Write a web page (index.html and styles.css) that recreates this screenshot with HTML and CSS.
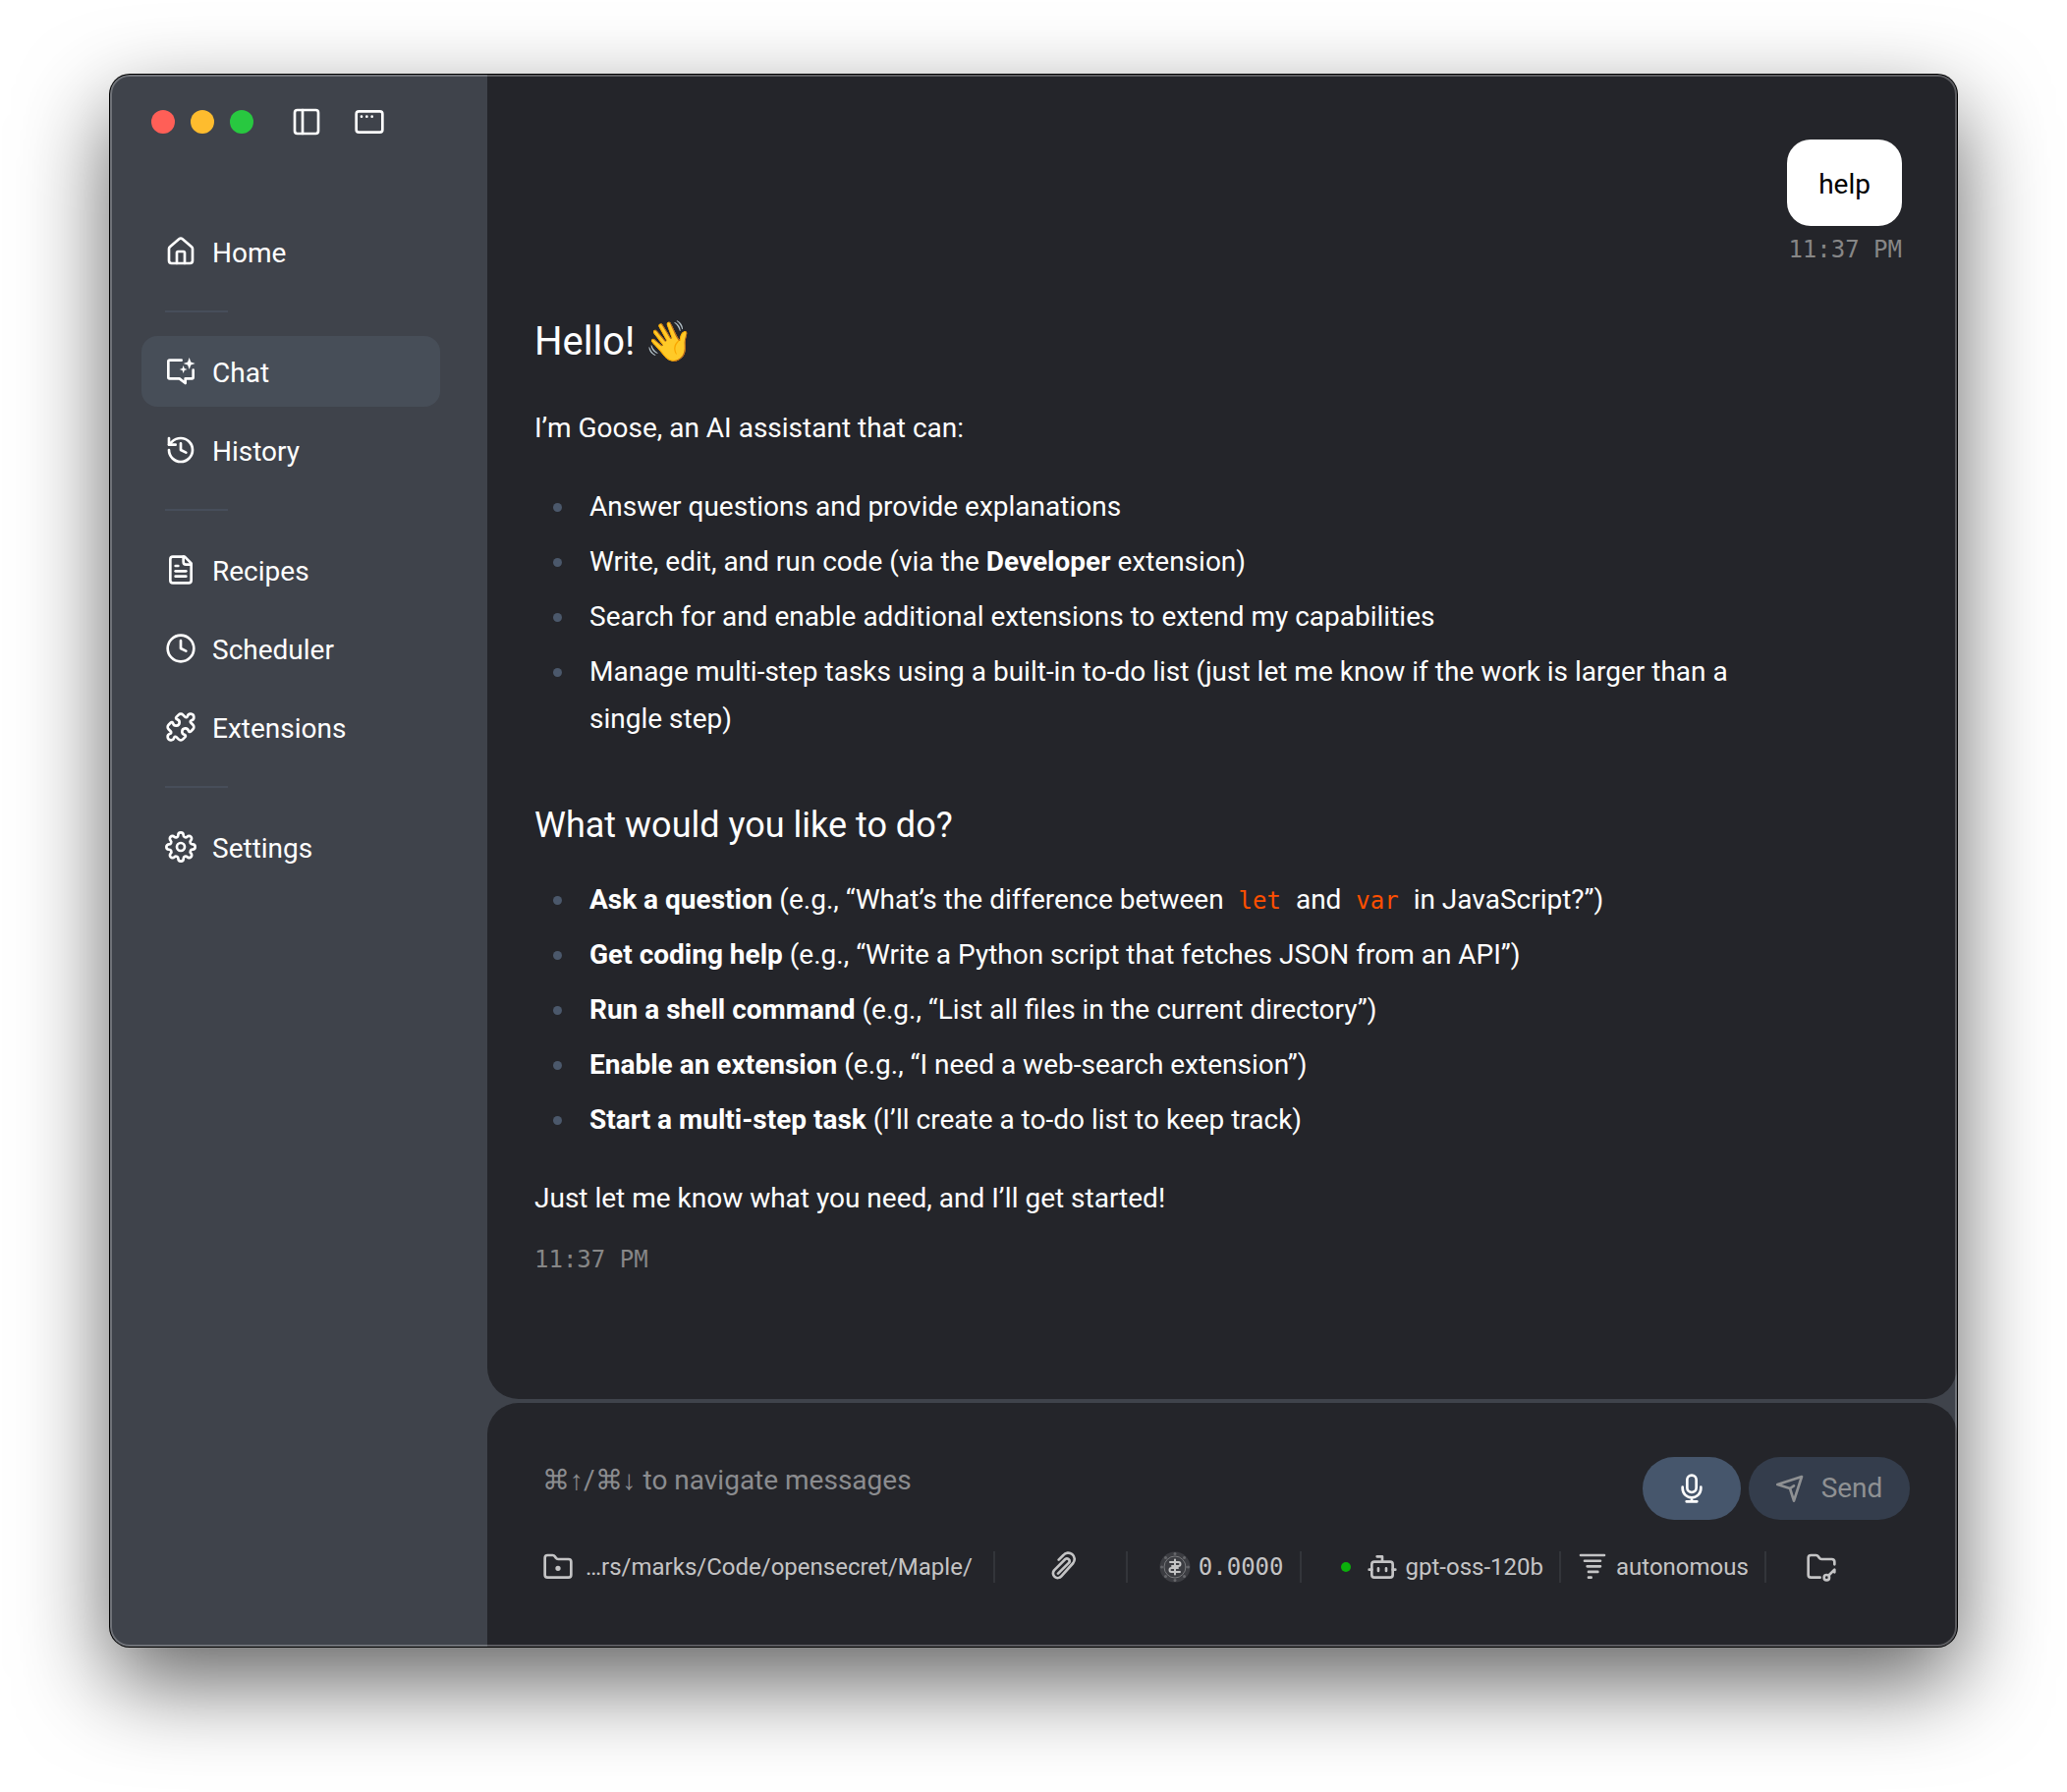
FILE: index.html
```html
<!DOCTYPE html>
<html lang="en">
<head>
    <meta charset="UTF-8">
    <meta name="viewport" content="width=device-width, initial-scale=1.0">
    <title>Goose</title>
    <link rel="stylesheet" href="styles.css">
</head>
<body>
    <div class="window">
        <aside class="sidebar">
            <div class="titlebar">
                <div class="lights">
                    <button class="light close" aria-label="Close"></button>
                    <button class="light minimize" aria-label="Minimize"></button>
                    <button class="light maximize" aria-label="Maximize"></button>
                </div>
                <button class="icon-button" aria-label="Toggle sidebar">
                    <svg class="icon" viewBox="0 0 24 24"><rect x="3" y="3" width="18" height="18" rx="2"/><path d="M9 3v18"/></svg>
                </button>
                <button class="icon-button" aria-label="New window">
                    <svg class="icon" viewBox="0 0 24 24"><rect x="2" y="4" width="20" height="16" rx="2"/><path d="M6 8h.01M10 8h.01M14 8h.01"/></svg>
                </button>
            </div>

            <nav class="nav">
                <a class="nav-item" href="#home">
                    <svg class="icon" viewBox="0 0 24 24"><path d="M15 21v-8a1 1 0 0 0-1-1h-4a1 1 0 0 0-1 1v8"/><path d="M3 10a2 2 0 0 1 .709-1.528l7-5.999a2 2 0 0 1 2.582 0l7 5.999A2 2 0 0 1 21 10v9a2 2 0 0 1-2 2H5a2 2 0 0 1-2-2z"/></svg>
                    <span class="nav-label">Home</span>
                </a>
                <hr class="nav-divider">
                <a class="nav-item active" href="#chat">
                    <svg class="icon" viewBox="0 0 24 24"><path d="M12.500 3.500H3.500a1 1 0 0 0-1 1v12a1 1 0 0 0 1 1H11l4.500 3.500V17.500h5a1 1 0 0 0 1-1v-5.500"/><path class="solid" d="M18.500 1.500l1.200 3.300 3.300 1.200-3.300 1.200-1.200 3.300-1.200-3.300-3.300-1.200 3.300-1.200zM14 7.500l.8 2.200 2.200.8-2.200.8-.8 2.200-.8-2.200-2.200-.8 2.200-.8z"/></svg>
                    <span class="nav-label">Chat</span>
                </a>
                <a class="nav-item" href="#history">
                    <svg class="icon" viewBox="0 0 24 24"><path d="M3 12a9 9 0 1 0 9-9 9.750 9.750 0 0 0-6.740 2.740L3 8"/><path d="M3 3v5h5"/><path d="M12 7v5l4 2"/></svg>
                    <span class="nav-label">History</span>
                </a>
                <hr class="nav-divider">
                <a class="nav-item" href="#recipes">
                    <svg class="icon" viewBox="0 0 24 24"><path d="M15 2H6a2 2 0 0 0-2 2v16a2 2 0 0 0 2 2h12a2 2 0 0 0 2-2V7z"/><path d="M14 2v4a2 2 0 0 0 2 2h4"/><path d="M10 9H8"/><path d="M16 13H8"/><path d="M16 17H8"/></svg>
                    <span class="nav-label">Recipes</span>
                </a>
                <a class="nav-item" href="#scheduler">
                    <svg class="icon" viewBox="0 0 24 24"><circle cx="12" cy="12" r="10"/><path d="M12 6v6l4 2"/></svg>
                    <span class="nav-label">Scheduler</span>
                </a>
                <a class="nav-item" href="#extensions">
                    <svg class="icon" viewBox="0 0 24 24"><path d="M15.390 4.390a1 1 0 0 0 1.680-.474 2.500 2.500 0 1 1 3.014 3.015 1 1 0 0 0-.474 1.680l1.683 1.682a2.414 2.414 0 0 1 0 3.414L19.610 15.390a1 1 0 0 1-1.680-.474 2.500 2.500 0 1 0-3.014 3.015 1 1 0 0 1 .474 1.680l-1.683 1.682a2.414 2.414 0 0 1-3.414 0L8.610 19.610a1 1 0 0 0-1.680.474 2.500 2.500 0 1 1-3.014-3.015 1 1 0 0 0 .474-1.680l-1.683-1.682a2.414 2.414 0 0 1 0-3.414L4.390 8.610a1 1 0 0 1 1.680.474 2.500 2.500 0 1 0 3.014-3.015 1 1 0 0 1-.474-1.680l1.683-1.682a2.414 2.414 0 0 1 3.414 0z"/></svg>
                    <span class="nav-label">Extensions</span>
                </a>
                <hr class="nav-divider">
                <a class="nav-item" href="#settings">
                    <svg class="icon" viewBox="0 0 24 24"><circle cx="12" cy="12" r="3"/><path d="M19.400 15a1.650 1.650 0 0 0 .330 1.820l.060.060a2 2 0 0 1 0 2.830 2 2 0 0 1-2.830 0l-.060-.060a1.650 1.650 0 0 0-1.820-.330 1.650 1.650 0 0 0-1 1.510V21a2 2 0 0 1-2 2 2 2 0 0 1-2-2v-.090A1.650 1.650 0 0 0 9 19.400a1.650 1.650 0 0 0-1.820.330l-.060.060a2 2 0 0 1-2.830 0 2 2 0 0 1 0-2.830l.060-.060a1.650 1.650 0 0 0 .330-1.820 1.650 1.650 0 0 0-1.510-1H3a2 2 0 0 1-2-2 2 2 0 0 1 2-2h.090A1.650 1.650 0 0 0 4.600 9a1.650 1.650 0 0 0-.330-1.820l-.060-.060a2 2 0 0 1 0-2.830 2 2 0 0 1 2.830 0l.060.060a1.650 1.650 0 0 0 1.820.330H9a1.650 1.650 0 0 0 1-1.510V3a2 2 0 0 1 2-2 2 2 0 0 1 2 2v.090a1.650 1.650 0 0 0 1 1.510 1.650 1.650 0 0 0 1.820-.330l.060-.060a2 2 0 0 1 2.830 0 2 2 0 0 1 0 2.830l-.060.060a1.650 1.650 0 0 0-.330 1.820V9a1.650 1.650 0 0 0 1.510 1H21a2 2 0 0 1 2 2 2 2 0 0 1-2 2h-.090a1.650 1.650 0 0 0-1.510 1z"/></svg>
                    <span class="nav-label">Settings</span>
                </a>
            </nav>
        </aside>

        <main class="main">
            <section class="chat">
                <div class="user-message">
                    <div class="bubble">help</div>
                    <time class="timestamp">11:37 PM</time>
                </div>

                <article class="assistant-message">
                    <h1>Hello! 👋</h1>
                    <p>I’m Goose, an AI assistant that can:</p>
                    <ul>
                        <li>Answer questions and provide explanations</li>
                        <li>Write, edit, and run code (via the <strong>Developer</strong> extension)</li>
                        <li>Search for and enable additional extensions to extend my capabilities</li>
                        <li>Manage multi-step tasks using a built-in to-do list (just let me know if the work is larger than a single step)</li>
                    </ul>
                    <h2>What would you like to do?</h2>
                    <ul>
                        <li><strong>Ask a question</strong> (e.g., “What’s the difference between <code>let</code> and <code>var</code> in JavaScript?”)</li>
                        <li><strong>Get coding help</strong> (e.g., “Write a Python script that fetches JSON from an API”)</li>
                        <li><strong>Run a shell command</strong> (e.g., “List all files in the current directory”)</li>
                        <li><strong>Enable an extension</strong> (e.g., “I need a web-search extension”)</li>
                        <li><strong>Start a multi-step task</strong> (I’ll create a to-do list to keep track)</li>
                    </ul>
                    <p>Just let me know what you need, and I’ll get started!</p>
                    <time class="timestamp">11:37 PM</time>
                </article>
            </section>

            <form class="composer">
                <div class="input-row">
                    <textarea class="prompt" rows="1" aria-label="Message" placeholder="⌘↑/⌘↓ to navigate messages"></textarea>
                    <button class="mic" type="button" aria-label="Dictate">
                        <svg class="icon" viewBox="0 0 24 24"><rect x="8.500" y="2" width="7" height="13" rx="3.500"/><path d="M5 11v1a7 7 0 0 0 14 0v-1M12 19v3M8 22h8"/></svg>
                    </button>
                    <button class="send" type="submit" disabled>
                        <svg class="icon" viewBox="0 0 24 24"><path d="M2.500 9L21 3l-6 18.500-3-9.500z"/><path d="M12 12l3-2"/></svg>
                        Send
                    </button>
                </div>

                <div class="status-row">
                    <button class="status directory" type="button">
                        <svg class="icon" viewBox="0 0 24 24"><path d="M4 20h16a2 2 0 0 0 2-2V8a2 2 0 0 0-2-2h-7.930a2 2 0 0 1-1.660-.900l-.820-1.200A2 2 0 0 0 7.930 3H4a2 2 0 0 0-2 2v13c0 1.100.9 2 2 2Z"/><circle cx="12" cy="13" r="1"/></svg>
                        …rs/marks/Code/opensecret/Maple/
                    </button>
                    <button class="status attach" type="button" aria-label="Attach file">
                        <svg class="icon" viewBox="0 0 24 24"><path d="M8 6.500l3.500-3.500a4.600 4.600 0 0 1 7.500 6L10 19a3.500 3.500 0 0 1-5.500-4.500L13 6a2 2 0 0 1 3 2.500L7.500 17"/></svg>
                    </button>
                    <span class="status cost">
                        <svg class="icon coin" viewBox="0 0 32 32"><circle class="coin-face" cx="16" cy="16" r="15.500"/><circle class="coin-ring" cx="16" cy="16" r="11"/><path class="coin-studs" d="M16 2.500h.01M16 29.500h.01M2.500 16h.01M29.500 16h.01M6.500 6.500h.01M25.500 6.500h.01M6.500 25.500h.01M25.500 25.500h.01"/><path d="M16 8.500v15M11 11h8.500a2 2 0 0 1 0 4H13M19 17h-6.500a2 2 0 0 0 0 4H21"/></svg>
                        0.0000
                    </span>
                    <button class="status model" type="button">
                        <span class="online"></span>
                        <svg class="icon" viewBox="0 0 24 24"><path d="M12 8V4H8"/><rect x="4" y="8" width="16" height="12" rx="2"/><path d="M2 14h2M20 14h2M15 13v2M9 13v2"/></svg>
                        gpt-oss-120b
                    </button>
                    <button class="status mode" type="button">
                        <svg class="icon" viewBox="0 0 24 24"><path d="M3 3h18M6 7.300h12M8 11.500h10M9 15.700h7M9 20h2"/></svg>
                        autonomous
                    </button>
                    <button class="status hints" type="button" aria-label="Configure hints">
                        <svg class="icon" viewBox="0 0 24 24"><path d="M11 20H4a2 2 0 0 1-2-2V5a2 2 0 0 1 2-2h3.900a2 2 0 0 1 1.700.9l.8 1.200a2 2 0 0 0 1.700.9H20a2 2 0 0 1 2 2v2M18 18l4-4v2"/><circle cx="16" cy="20" r="2"/></svg>
                    </button>
                </div>
            </form>
        </main>
    </div>
</body>
</html>
```
FILE: styles.css
```css
* {
    box-sizing: border-box;
}

body {
    margin: 0;
    padding: 76px 112px 148px;
    font-family: Roboto, 'Liberation Sans', sans-serif;
    font-size: 28px;
    line-height: 40px;
    background: #fff;
    color: #fff;
}

button {
    padding: 0;
    border: none;
    background: none;
    color: inherit;
    font: inherit;
    cursor: pointer;
}

.icon {
    flex: none;
    width: 32px;
    height: 32px;
    fill: none;
    stroke: currentColor;
    stroke-width: 2;
    stroke-linecap: round;
    stroke-linejoin: round;
}

.solid {
    fill: currentColor;
    stroke: none;
}

/* Window frame */
.window {
    position: relative;
    display: flex;
    min-height: calc(100vh - 224px);
    border-radius: 20px;
    overflow: hidden;
    background: #3f434b;
    box-shadow: 0 0 0 1px #000, 0 36px 92px rgba(0, 0, 0, 0.62);
}

/* light rim drawn over the panels */
.window::after {
    content: '';
    position: absolute;
    inset: 0;
    border: 2px solid rgba(255, 255, 255, 0.25);
    border-radius: 20px;
    pointer-events: none;
}

/* Sidebar */
.sidebar {
    flex: none;
    width: 384px;
    padding: 32px 48px 32px 32px;
}

.titlebar {
    display: flex;
    align-items: center;
    gap: 32px;
    height: 32px;
    padding-left: 10px;
}

.lights {
    display: flex;
    gap: 16px;
    margin-right: 6px;
}

.light {
    width: 24px;
    height: 24px;
    border-radius: 50%;
}

.close {
    background: #ff5f57;
}

.minimize {
    background: #febc2e;
}

.maximize {
    background: #28c840;
}

.icon-button {
    display: flex;
}

.nav {
    display: flex;
    flex-direction: column;
    gap: 8px;
    margin-top: 80px;
}

.nav-item {
    display: flex;
    align-items: center;
    gap: 16px;
    height: 72px;
    padding: 0 24px;
    border-radius: 16px;
    color: inherit;
    text-decoration: none;
}

.nav-label {
    padding-top: 3px;
}

.nav-item.active {
    background: #474e58;
}

.nav-divider {
    width: 64px;
    height: 2px;
    margin: 16px 24px;
    border: none;
    background: #474e5a;
}

/* Conversation */
.main {
    flex: 1;
    display: flex;
    flex-direction: column;
    gap: 4px;
    min-width: 0;
}

.chat {
    flex: 1;
    padding: 66px 56px 48px 48px;
    border-radius: 0 0 32px 32px;
    background: #24252a;
}

.user-message {
    display: flex;
    flex-direction: column;
    align-items: flex-end;
    gap: 8px;
}

.bubble {
    padding: 26px 32px 22px;
    border-radius: 24px;
    background: #fff;
    color: #000;
}

.timestamp {
    display: block;
    font-family: 'DejaVu Sans Mono', monospace;
    font-size: 24px;
    line-height: 32px;
    color: #878787;
}

.assistant-message {
    max-width: 90%;
    margin-top: 54px;
    line-height: 48px;
}

.assistant-message h1 {
    margin: 0;
    font-size: 40px;
    font-weight: 400;
}

.assistant-message h2 {
    margin: 60px 0 28px;
    font-size: 36px;
    font-weight: 400;
}

.assistant-message p {
    margin: 40px 0 32px;
}

.assistant-message ul {
    margin: 0;
    padding-left: 43px;
}

.assistant-message li {
    margin-bottom: 8px;
    padding-left: 13px;
}

.assistant-message li::marker {
    color: #4b586b;
}

.assistant-message ul + p {
    margin: 32px 0 22px;
}

code {
    padding: 0 8px;
    font-family: 'DejaVu Sans Mono', monospace;
    font-size: 24px;
    line-height: 1;
    color: #ff4f00;
}

/* Composer */
.composer {
    padding: 55px 48px 65px;
    border-radius: 32px 32px 0 0;
    background: #24252a;
}

.input-row {
    display: flex;
    gap: 8px;
}

.prompt {
    flex: 1;
    min-width: 0;
    height: 64px;
    padding: 4px 8px;
    border: none;
    outline: none;
    resize: none;
    background: none;
    color: #fff;
    font: inherit;
}

.prompt::placeholder {
    color: #8b8c8f;
}

.mic,
.send {
    display: flex;
    align-items: center;
    justify-content: center;
    height: 64px;
    border-radius: 32px;
}

.mic {
    width: 100px;
    background: #46566c;
}

.send {
    width: 164px;
    gap: 16px;
    padding-right: 2px;
    background: #343d4c;
    color: #8f9193;
}

.status-row {
    display: flex;
    align-items: center;
    margin-top: 32px;
    padding-left: 8px;
    font-size: 24px;
    line-height: 32px;
    color: #c4c4c5;
}

.status {
    display: flex;
    align-items: center;
    justify-content: center;
    gap: 8px;
    height: 32px;
    border-right: 2px solid #33353a;
}

.directory {
    gap: 12px;
    padding-right: 21px;
}

.attach {
    width: 135px;
    padding-left: 8px;
}

.cost {
    padding: 0 16px 0 32px;
    font-family: 'DejaVu Sans Mono', monospace;
}

.coin {
    stroke-width: 2;
}

.coin-face {
    fill: #3c3d42;
    stroke: none;
}

.coin-ring {
    stroke: #77787b;
    stroke-width: 1;
}

.coin-studs {
    stroke: #66676b;
    stroke-width: 3;
}

.model {
    padding: 0 16px 0 40px;
}

.online {
    width: 10px;
    height: 10px;
    margin-right: 8px;
    border-radius: 50%;
    background: #0bb00b;
}

.mode {
    padding: 0 16px;
}

.hints {
    width: 112px;
    border-right: none;
}
```
